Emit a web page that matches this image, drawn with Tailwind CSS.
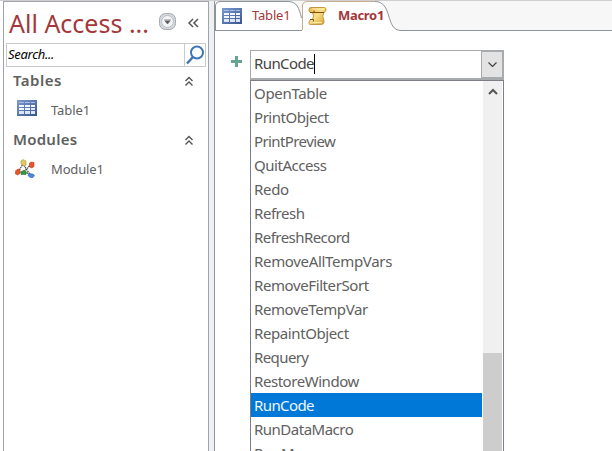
<!DOCTYPE html>
<html lang="en">
<head>
<meta charset="utf-8">
<title>Macro1</title>
<script src="https://cdn.jsdelivr.net/npm/@tailwindcss/browser@4"></script>
</head>
<body class="w-[612px] h-[451px] overflow-hidden bg-white border-t border-[#cfcfcf] flex font-['Noto_Sans','Open_Sans',sans-serif] text-[#606060]">
  <svg class="absolute w-0 h-0">
    <defs>
      <linearGradient id="blue" x1="0" y1="0" x2="1" y2="1"><stop offset="0" stop-color="#7b9bd0"/><stop offset="1" stop-color="#38548c"/></linearGradient>
      <linearGradient id="gold" x1="0" y1="0" x2="1" y2="1"><stop offset="0" stop-color="#e5b23c"/><stop offset=".45" stop-color="#fbe08a"/><stop offset="1" stop-color="#d39a28"/></linearGradient>
      <symbol id="table" viewBox="0 0 20 16">
        <rect width="20" height="16" fill="url(#blue)"/>
        <path fill="#a9bfe4" d="M2 2h5v1H2zM8 2h5v1H8zM14 2h4v1h-4z"/>
        <path fill="#f4f7fc" d="M2 5h5v2H2zM8 5h5v2H8zM14 5h4v2h-4zM2 8h5v2H2zM8 8h5v2H8z"/>
        <path fill="#dce5f3" d="M14 8h4v2h-4zM2 11h5v3H2zM8 11h5v3H8zM14 11h4v3h-4z"/>
      </symbol>
      <symbol id="collapse" viewBox="0 0 10 11"><path d="M1.500 5L5 1.500 8.500 5M1.500 9.500L5 6l3.500 3.500" fill="none" stroke="#555" stroke-width="1.400"/></symbol>
    </defs>
  </svg>

  <aside class="ml-[3px] w-[206px] shrink-0 border-x border-t border-[#a0a3ac] flex flex-col">
    <header class="h-[41px] flex items-center pl-[5px] shrink-0">
      <h1 class="w-[150px] text-[25px] leading-[40px] tracking-[0px] text-[#a4373a] whitespace-nowrap">All Access ...</h1>
      <svg class="w-[17px] h-[17px] -mt-[2px]" viewBox="0 0 17 17"><rect x=".5" y=".5" width="16" height="16" rx="6" fill="#d5d8dc" stroke="#a5a9b0"/><circle cx="8.500" cy="8.500" r="6" fill="#f2f4f6" stroke="#b9bdc4"/><path d="M5 7h7M6 8h5l-2.500 3z" fill="#555" stroke="#666" stroke-width=".7"/></svg>
      <svg class="ml-[12px] w-[11px] h-[10px]" viewBox="0 0 11 10"><path d="M5 1L1 5l4 4M10 1L6 5l4 4" fill="none" stroke="#555" stroke-width="1.500"/></svg>
    </header>
    <div class="ml-[2px] w-[200px] h-[24px] shrink-0 border border-[#cacaca] flex">
      <div class="w-[178px] border-r border-[#cacaca] pl-[1px] text-[13px] leading-[21px] italic text-black tracking-[-0.3px]">Search...</div>
      <svg class="w-[20px] h-[22px]" viewBox="0 0 20 22"><circle cx="12" cy="8.500" r="6" fill="none" stroke="#3f74b5" stroke-width="2"/><path d="M8 13l-6 6.500" stroke="#3f74b5" stroke-width="2.500"/></svg>
    </div>
    <div class="h-[28px] flex items-center pl-[9px]"><h2 class="w-[171px] -mt-[2px] text-[15px] font-semibold tracking-[0.5px]">Tables</h2><svg class="w-[10px] h-[11px]"><use href="#collapse"/></svg></div>
    <div class="h-[31px] flex items-center pl-[13px]"><svg class="w-[20px] h-[16px] -mt-[5px]"><use href="#table"/></svg><span class="ml-[14px] text-[13px] tracking-[-0.1px]">Table1</span></div>
    <div class="h-[28px] flex items-center pl-[9px]"><h2 class="w-[171px] -mt-[2px] text-[15px] font-semibold tracking-[0.25px]">Modules</h2><svg class="w-[10px] h-[11px]"><use href="#collapse"/></svg></div>
    <div class="h-[31px] flex items-center pl-[11px]">
      <svg class="w-[20px] h-[19px] -mt-[2px]" viewBox="0 0 20 19">
        <path d="M3 13L8 5l8 12M9 13l7-8M3 13h7l6 3" fill="none" stroke="#444" stroke-width="1.200" stroke-dasharray="1.500 .7"/>
        <path d="M8 .5l3 1.500v4l-1.500 1L6 5V2z" fill="#e0cb62" stroke="#a08a2a" stroke-width=".5"/>
        <path d="M16 3l3 .500v4l-2 1.500-2.500-1V4z" fill="#e8552c" stroke="#a52e12" stroke-width=".5"/>
        <path d="M2 10.500l3-.500v4.500l-2.500 1.500-2-1v-3z" fill="#e8552c" stroke="#a52e12" stroke-width=".5"/>
        <path d="M9 11l2.500 2-.500 2.500H6v-2.500z" fill="#2f9a3c" stroke="#1b6a25" stroke-width=".5"/>
        <path d="M14 14.500l4 .500 1.500 1.500-1.500 2h-3l-2-2z" fill="#4a86e0" stroke="#2452a0" stroke-width=".5"/>
      </svg>
      <span class="ml-[16px] text-[13px] tracking-[-0.15px]">Module1</span></div>
  </aside>
  <div class="w-[6px] shrink-0 border-r border-[#8d949c] bg-[#eef0f3]"></div>

  <main class="flex-1 flex flex-col">
    <nav class="relative h-[30px] shrink-0 bg-[#f7f7f7]">
      <svg class="absolute inset-0 w-full h-[30px]" viewBox="215 1 397 30">
        <path d="M215.500 30.500V4Q215.500 1.500 219 1.500H288C297 1.500 299 8 301.500 18V30.500z" fill="#fff"/>
        <path d="M215.500 30V5Q216 1.500 220 1.500H288C297 1.500 299 8 301.500 18" fill="none" stroke="#8d9499"/>
        <path d="M215 30.500H302" stroke="#8d9499"/>
        <path d="M302.500 31V5Q303 1.500 307 1.500H375C393 1.500 385 30.500 401 30.500V31z" fill="#fff"/>
        <path d="M302.500 30V5Q303 1.500 307 1.500H375" fill="none" stroke="#c9ad91"/>
        <path d="M375 1.500C393 1.500 385 30.500 401 30.500H612" fill="none" stroke="#8d9499"/>
      </svg>
      <div class="relative flex items-center h-[30px] pl-[7px] text-[13px] text-[#a4373a]">
        <svg class="w-[20px] h-[16px] -mt-[1px]"><use href="#table"/></svg>
        <span class="ml-[10px] w-[56px] tracking-[-0.2px]">Table1</span>
        <svg class="w-[20px] h-[18px]" viewBox="0 0 20 18"><path d="M3 .500H16.500Q18.500 1 18 3T16 5.500Q13.500 9 16 13.500V15Q15.500 17.500 13.500 17.500H2Q.5 17 1 15T3 12.500H4.500Q6.500 9 4.500 5.500H2.500Q.500 5 1 2.500T3 .500z" fill="url(#gold)" stroke="#b5832a" stroke-width=".8"/><path d="M2 5.500H6V3.500M2 12.500H5.500V14.500M6 5.500H16" fill="none" stroke="#7a5010" stroke-width="1"/><path d="M4 2H16M5 15.500h9" stroke="#fff0b5" stroke-width="1"/></svg>
        <span class="ml-[10px] font-bold tracking-[-0.3px]">Macro1</span>
      </div>
    </nav>
    <div class="flex pl-[16px] pt-[19px] text-[15px] tracking-[-0.32px]">
      <svg class="w-[11px] h-[11px] mt-[6px] mr-[8px]" viewBox="0 0 11 11"><path d="M5.500 0v11M0 5.500h11" stroke="#69a58e" stroke-width="3"/></svg>
      <div class="w-[254px]">
        <div class="h-[30px] border border-b-2 border-[#a8abad] flex">
          <div class="w-[230px] pl-[3px] pb-[2px] flex items-center text-[#444]"><span class="tracking-[-0.6px]">RunCode</span><i class="w-px h-[20px] bg-black"></i></div>
          <div class="flex-1 border border-[#a8abad] bg-[#e3e3e3] flex items-center justify-center"><svg class="w-[9px] h-[5px]" viewBox="0 0 9 5"><path d="M.5.5l4 4 4-4" fill="none" stroke="#444" stroke-width="1.200"/></svg></div>
        </div>
        <div class="h-[371px] border-x border-t border-[#7c7f88] flex overflow-hidden">
          <ul class="w-[231px] shrink-0 leading-[24px] [&>li]:pl-[3px] [&>li]:h-[24px]">
            <li>OpenTable</li><li class="tracking-[-0.45px]">PrintObject</li><li class="tracking-[-0.6px]">PrintPreview</li><li class="tracking-[-0.45px]">QuitAccess</li><li>Redo</li><li class="tracking-[-0.45px]">Refresh</li><li class="tracking-[-0.55px]">RefreshRecord</li><li>RemoveAllTempVars</li><li class="tracking-[-0.4px]">RemoveFilterSort</li><li class="tracking-[-0.4px]">RemoveTempVar</li><li class="tracking-[-0.4px]">RepaintObject</li><li class="tracking-[-0.6px]">Requery</li><li class="tracking-[-0.45px]">RestoreWindow</li><li class="bg-[#0078d7] text-[#eef6ff] tracking-[-0.6px]">RunCode</li><li class="tracking-[-0.5px]">RunDataMacro</li><li>RunMacro</li>
          </ul>
          <div class="ml-[1px] w-[19px] bg-[#f0f0f0] flex flex-col">
            <svg class="mt-[7px] ml-[5px] w-[10px] h-[7px]" viewBox="0 0 10 7"><path d="M1 6l4-4 4 4" fill="none" stroke="#555" stroke-width="2"/></svg>
            <div class="mt-[258px] flex-1 bg-[#cdcdcd]"></div>
          </div>
          <div class="w-px bg-white"></div>
        </div>
      </div>
    </div>
  </main>
</body>
</html>
